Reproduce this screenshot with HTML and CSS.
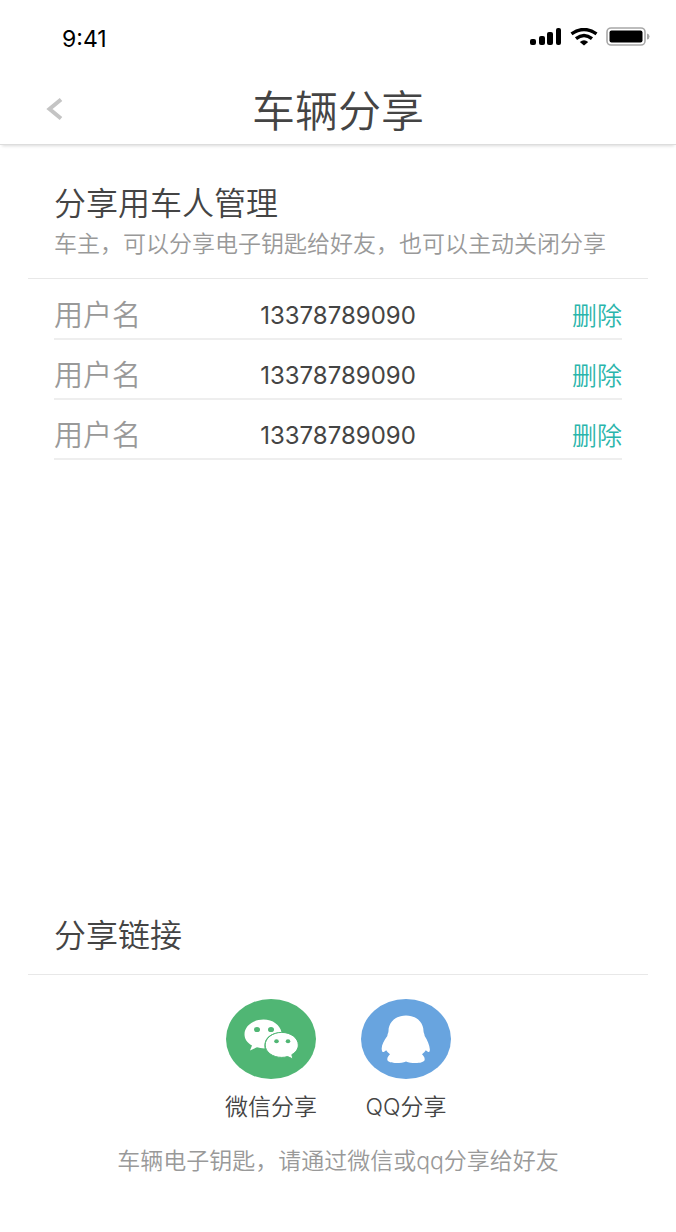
FILE: index.html
```html
<!DOCTYPE html>
<html lang="zh-CN">

<head>
    <meta charset="UTF-8">
    <meta name="viewport" content="width=device-width, initial-scale=1.0">
    <title>车辆分享</title>
    <link rel="stylesheet" href="styles.css">
</head>

<body>
    <!-- 状态栏 -->
    <div class="status-bar">
        <span class="time">9:41</span>
        <div class="status-icons">
            <svg width="32" height="18" viewBox="0 0 32 18">
                <rect x="0" y="11" width="6" height="6" rx="2" />
                <rect x="9" y="8" width="6" height="9" rx="2" />
                <rect x="17" y="4" width="6" height="13" rx="2" />
                <rect x="26" y="0" width="5" height="17" rx="2" />
            </svg>
            <svg width="28" height="18" viewBox="0 0 28 18">
                <path d="M1.5 5.8Q14-2.8 26.5 5.8" fill="none" stroke="#000" stroke-width="3.4" />
                <path d="M6 10.6Q14 4.4 22 10.6" fill="none" stroke="#000" stroke-width="3.4" />
                <path d="M9.8 14Q14 10.6 18.2 14L14 17.6Z" />
            </svg>
            <svg width="44" height="20" viewBox="0 0 44 20">
                <rect x="1" y="1" width="38" height="17" rx="4" fill="none" stroke="#a8a8a8" stroke-width="1.6" />
                <rect x="3.5" y="3.5" width="33" height="12" rx="2" />
                <path d="M41 6.5Q43.5 7 43.5 9.5T41 12.5Z" fill="#a8a8a8" />
            </svg>
        </div>
    </div>

    <!-- 标题栏 -->
    <header class="header">
        <button class="back" type="button" aria-label="返回">
            <svg width="18" height="24" viewBox="0 0 18 24">
                <path d="M15 2.5L3.5 12L15 21.5" fill="none" stroke="#c4c4c4" stroke-width="4" />
            </svg>
        </button>
        <h1>车辆分享</h1>
    </header>

    <main class="content">
        <!-- 用车人列表 -->
        <section>
            <div class="section-head">
                <h2>分享用车人管理</h2>
                <p class="note">车主，可以分享电子钥匙给好友，也可以主动关闭分享</p>
            </div>
            <ul class="users">
                <li>
                    <span class="name">用户名</span>
                    <span class="phone">13378789090</span>
                    <button class="delete" type="button">删除</button>
                </li>
                <li>
                    <span class="name">用户名</span>
                    <span class="phone">13378789090</span>
                    <button class="delete" type="button">删除</button>
                </li>
                <li>
                    <span class="name">用户名</span>
                    <span class="phone">13378789090</span>
                    <button class="delete" type="button">删除</button>
                </li>
            </ul>
        </section>

        <!-- 分享链接 -->
        <section class="share">
            <div class="section-head">
                <h2>分享链接</h2>
            </div>
            <div class="share-list">
                <button class="share-item" type="button">
                    <svg width="90" height="80" viewBox="0 0 90 80">
                        <ellipse cx="45" cy="40" rx="45" ry="40" fill="#50b674" />
                        <path d="M37.5 20.5C27 20.5 18.5 27 18.5 35.2C18.5 40 21.2 43.8 26 46.5L24 51.5L31 48.2Q34 49.2 38.6 49.4C37 40 44 33.2 55.5 33.2C54 26 46.8 20.5 37.5 20.5Z" fill="#fff" />
                        <path d="M55.7 33.4C46.5 33.4 39.2 39 39.2 46C39.2 53 46.5 58.4 55.7 58.4Q59 58.4 61.5 57.5L67 60L65.8 55.7C70 53 72.3 50 72.3 46C72.3 39 64.9 33.4 55.7 33.4Z" fill="#fff" stroke="#50b674" stroke-width="1" />
                        <g fill="#50b674">
                            <ellipse cx="31" cy="30.5" rx="3" ry="2.6" />
                            <ellipse cx="45" cy="30.5" rx="3" ry="2.6" />
                            <ellipse cx="50.5" cy="42.2" rx="2.3" ry="2" />
                            <ellipse cx="62" cy="42.2" rx="2.3" ry="2" />
                        </g>
                    </svg>
                    <span>微信分享</span>
                </button>
                <button class="share-item" type="button">
                    <svg width="90" height="80" viewBox="0 0 90 80">
                        <ellipse cx="45" cy="40" rx="45" ry="40" fill="#68a4df" />
                        <path d="M45 16.5C34.5 16.5 27.5 23.5 27.5 32C27.5 34 26.5 34.5 26.3 37C23 41.5 20.5 46 20.7 50Q20.8 54 23.2 52.8L25.2 51.2Q26.5 53.5 29 55.3C27 57.2 26 59 26.4 61C27 64.5 39 65 45 62.5C51 65 63 64.5 63.6 61C64 59 63 57.2 61 55.3Q63.5 53.5 64.8 51.2L66.8 52.8Q69.2 54 68.8 50C68.5 46 66.5 41.5 63.7 37C63.5 34.5 62.5 34 62.5 32C62.5 23.5 55.5 16.5 45 16.5Z" fill="#fff" />
                    </svg>
                    <span>QQ分享</span>
                </button>
            </div>
            <p class="note tip">车辆电子钥匙，请通过微信或qq分享给好友</p>
        </section>
    </main>
</body>

</html>
```
FILE: styles.css
```css
* {
    box-sizing: border-box;
    margin: 0;
    padding: 0;
}

body {
    display: flex;
    flex-direction: column;
    min-height: 100vh;
    background-color: #fff;
    color: #444;
    font-family: Inter, "Noto Sans CJK SC", sans-serif;
}

button {
    background: none;
    border: none;
    color: inherit;
    font-family: inherit;
    cursor: pointer;
}

svg {
    display: block;
}

h1,
h2 {
    font-weight: 350;
}

.status-bar {
    display: flex;
    justify-content: space-between;
    align-items: center;
    height: 74px;
    padding: 0 26px 0 62px;
    color: #000;
    font-size: 23px;
}

.time {
    padding-top: 4px;
}

.status-icons {
    display: flex;
    align-items: center;
    gap: 8px;
}

.header {
    display: grid;
    grid-template-columns: 1fr auto 1fr;
    align-items: center;
    height: 71px;
    padding: 0 46px;
    border-bottom: 1px solid #ddd;
    box-shadow: 0 3px 3px -2px rgba(0, 0, 0, 0.15);
}

.back {
    justify-self: start;
}

.header h1 {
    padding-top: 4px;
    font-size: 43px;
    line-height: 64px;
}

.content {
    display: flex;
    flex: 1;
    flex-direction: column;
    justify-content: space-between;
    padding: 36px 28px 55px;
}

.section-head {
    padding: 0 26px 18px;
    border-bottom: 1px solid #e8e8e8;
}

.section-head h2 {
    font-size: 32px;
    line-height: 46px;
}

.note {
    color: #999;
    font-size: 23px;
    font-weight: 350;
    line-height: 32px;
}

.section-head .note {
    padding-top: 1px;
}

.users {
    padding: 1px 26px 0;
    list-style: none;
}

.users li {
    display: grid;
    grid-template-columns: 1fr auto 1fr;
    align-items: end;
    height: 60px;
    padding-bottom: 2px;
    border-bottom: 2px solid #eee;
    line-height: 40px;
}

.name {
    color: #999;
    font-size: 29px;
    font-weight: 350;
}

.phone {
    font-size: 24px;
}

.delete {
    justify-self: end;
    color: #2bb5ab;
    font-size: 25px;
    font-weight: 350;
    line-height: 40px;
}

.share .section-head {
    padding-bottom: 15px;
}

.share-list {
    display: flex;
    justify-content: center;
    gap: 44px;
    padding: 24px 0 22px;
}

.share-item {
    display: flex;
    flex-direction: column;
    align-items: center;
    gap: 12px;
    font-size: 23px;
    font-weight: 350;
    line-height: 32px;
}

.tip {
    text-align: center;
}
```
